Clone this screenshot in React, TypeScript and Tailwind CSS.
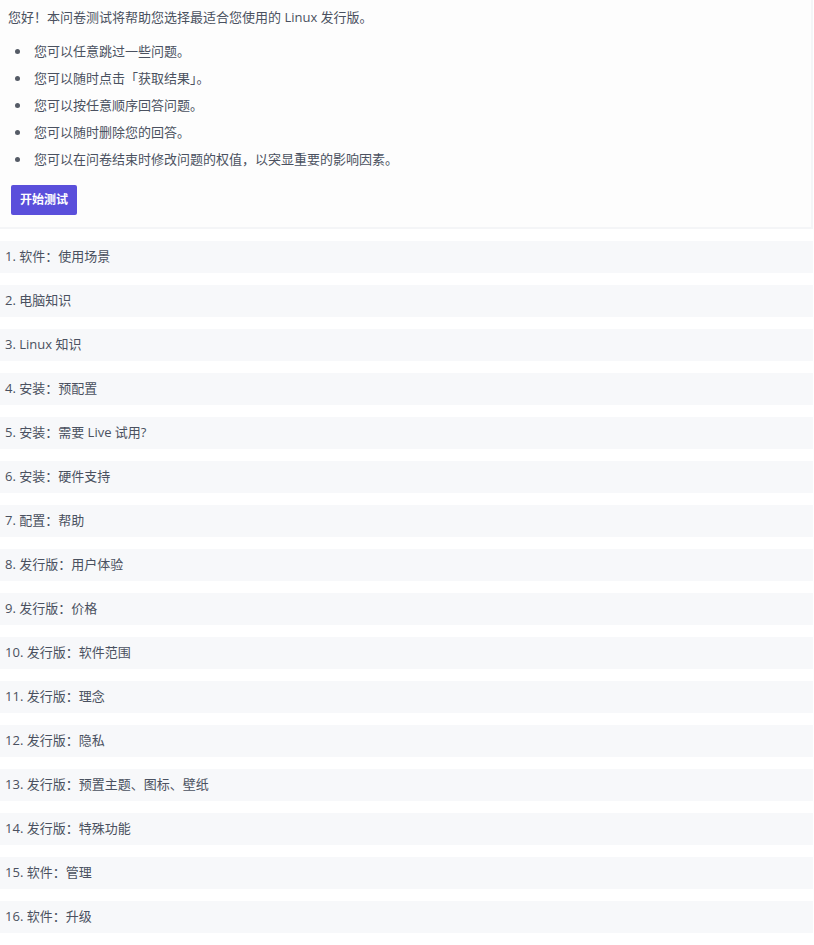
import React from "react";

const rules = [
  "您可以任意跳过一些问题。",
  "您可以随时点击「获取结果」。",
  "您可以按任意顺序回答问题。",
  "您可以随时删除您的回答。",
  "您可以在问卷结束时修改问题的权值，以突显重要的影响因素。",
];

const questions = [
  "软件：使用场景",
  "电脑知识",
  "Linux 知识",
  "安装：预配置",
  "安装：需要 Live 试用?",
  "安装：硬件支持",
  "配置：帮助",
  "发行版：用户体验",
  "发行版：价格",
  "发行版：软件范围",
  "发行版：理念",
  "发行版：隐私",
  "发行版：预置主题、图标、壁纸",
  "发行版：特殊功能",
  "软件：管理",
  "软件：升级",
];

export default function App() {
  return (
    <div
      className="w-[814px] h-[945px] bg-white text-[13px] text-[#4a5160] overflow-hidden"
      style={{ fontFamily: '"Open Sans", "Noto Sans CJK SC", sans-serif' }}
    >
      {/* intro card */}
      <div className="w-[813px] bg-[#fdfdfd] border-r-2 border-b-2 border-[#f4f5f7] px-2 pt-[7px] pb-[12px]">
        <p className="leading-5">您好！本问卷测试将帮助您选择最适合您使用的 Linux 发行版。</p>
        <ul className="mt-[14px] flex flex-col gap-[7px]">
          {rules.map((r) => (
            <li key={r} className="flex items-center leading-5">
              <span className="ml-[7px] w-[5px] h-[5px] rounded-full bg-[#555b66]" />
              <span className="ml-[14px]">{r}</span>
            </li>
          ))}
        </ul>
        <button className="mt-[16px] ml-[3px] h-[30px] px-[9px] rounded-[2px] bg-[#5a4fdb] text-white text-[12px] font-semibold">
          开始测试
        </button>
      </div>

      {/* question list */}
      <div className="mt-[12px] flex flex-col gap-[12px]">
        {questions.map((q, i) => (
          <div key={q} className="w-[813px] h-[32px] bg-[#f7f8fa] flex items-center px-[5px]">
            {i + 1}. {q}
          </div>
        ))}
      </div>
    </div>
  );
}
